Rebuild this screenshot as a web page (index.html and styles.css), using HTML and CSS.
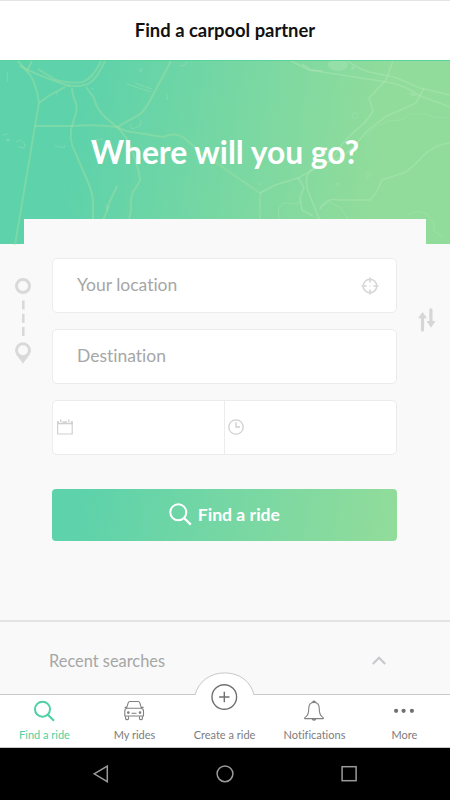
FILE: index.html
```html
<!DOCTYPE html>
<html lang="en">
<head>
    <meta charset="UTF-8">
    <meta name="viewport" content="width=device-width, initial-scale=1.0">
    <title>Find a carpool partner</title>
    <link rel="stylesheet" href="styles.css">
</head>
<body>
    <header class="topbar">
        <h1>Find a carpool partner</h1>
    </header>

    <section class="hero">
        <svg class="map" viewBox="0 0 450 184" fill="none">
            <!-- main roads -->
            <g class="roads">
                <path d="M18 0 L31 15 Q37 26 39 42 L35 65 L15 184"/>
                <path d="M35 65 L70 65 Q96 63 117 66 L126 70 L163 76 Q174 71 183 76 L196 87 L225 108 L260 132 V160"/>
                <path d="M20 5 Q30 10 39 14 L60 22 Q73 28 88 23 Q97 18 105 0"/>
                <path d="M38 8 L56 19 Q73 23 83 21 Q93 17 101 0 M32 0 L27 10"/>
                <path d="M39 42 L50 34 L65 26 M72 27 Q72 34 76 42 Q78 50 74 58 L71 69 Q70 77 72 84 L84 112 Q92 128 93 139 V160"/>
                <path d="M86 26 L94 37 Q97 49 105 56 L117 66 Q129 77 134 95 L139 111 L140 120 L133 131 Q130 139 131 148 L129 160"/>
                <path d="M171 0 L154 32 Q146 49 139 54 L126 61 Q121 64 117 66 M117 125 L109 142 Q107 153 102 160"/>
            </g>
            <g class="roads faint">
                <path d="M291 0 L309 9 L387 21 Q405 24 418 34 L450 46"/>
                <path d="M302 3 L311 9 L323 10 M348 0 Q361 10 374 12 L394 16 L420 27 L450 34"/>
                <path d="M393 0 L386 19 L369 37 L373 50 Q367 61 354 71 Q340 83 333 98 L298 117 L275 124 L260 132"/>
                <path d="M424 27 L416 42 L385 56 L366 71 Q350 92 338 97 L314 107 Q303 113 308 130 L320 160"/>
                <path d="M298 117 L304 126 L300 137 L302 149 L313 155 M320 148 Q327 136 338 139 H370 Q376 134 382 119 L406 111 Q415 104 424 94 Q436 83 450 82"/>
            </g>
            <g class="paths">
                <path d="M367 74 L377 65 L389 60 L401 59 L410 53 H425 L434 56 L450 57"/>
                <path d="M280 160 Q275 147 284 142 L298 143 L302 137 M320 146 L329 141 L340 146 L348 158"/>
                <path d="M408 154 L419 150 L427 153 L434 162 V170 L443 176"/>
                <path d="M353 52 h5 v5 l-4 1 l-2 -3z M366 111 l5 3 -4 3z M336 122 l2 3 2 -2z M258 121 l2 3 2 -2"/>
                <path d="M95 78 l3 1 5 -1 M55 84 l3 2 h7 v-2 M3 74 l5 -1 M16 81 l4 -2 5 4 -1 4 -6 -1 M8 10 q-2 6 0 11"/>
                <path d="M166 32 l2 3 -1 4 M138 8 l3 3 1 -4 M180 5 l5 -1 2 -3 M106 143 l1 6 2 -4 M130 63 l2 5 8 -3 1 -6"/>
                <path d="M127 23 l24 8 M135 22 l17 6 M58 31 l-2 3 M91 28 l3 -1"/>
            </g>
            <ellipse class="lake" cx="338" cy="4" rx="10" ry="6"/>
            <circle class="lake" cx="8" cy="79" r="1.5"/>
            <circle class="lake" cx="353" cy="7" r="2"/>
            <path class="lake" d="M408 31 l4 1 2 -2 0 3 3 2 -5 0z"/>
        </svg>
        <h2>Where will you go?</h2>
        <div class="panel-top"></div>
    </section>

    <main class="search">
        <svg class="route" width="16" height="86" viewBox="0 0 16 86">
            <circle cx="8" cy="8" r="6.5" fill="none" stroke="#d9d9d9" stroke-width="3"/>
            <path d="M8.3 22.5 v9 M8.3 35.8 v9 M8.3 49 v9" stroke="#d9d9d9" stroke-width="2.6"/>
            <path fill-rule="evenodd" fill="#d9d9d9" d="M8 64.3 a8 8 0 0 0 -8 8 c0 4.4 5 8.5 8 13.5 c3 -5 8 -9.1 8 -13.5 a8 8 0 0 0 -8 -8z M8 67.3 a5 5 0 1 1 0 10 a5 5 0 0 1 0 -10z"/>
        </svg>
        <div class="fields">
            <div class="field">
                <span>Your location</span>
                <svg width="18" height="18" viewBox="0 0 18 18" fill="none" stroke="#d6d6d6">
                    <circle cx="9" cy="9" r="6.8" stroke-width="1.6"/>
                    <path d="M9 .5 V5.6 M9 12.4 V17.5 M.5 9 H5.6 M12.4 9 H17.5" stroke-width="1.7"/>
                    <path d="M8.4 9 H9.6" stroke-width="1.2"/>
                </svg>
            </div>
            <div class="field">
                <span>Destination</span>
            </div>
            <div class="field split">
                <div class="half">
                    <svg width="16" height="16" viewBox="0 0 16 16" fill="none" stroke="#d0d0d0">
                        <path d="M.6 2.5 V15 H15.2 V2.5" stroke-width="1.2"/>
                        <path d="M0 4.5 H15.8" stroke-width="1.6"/>
                        <path d="M0 3 H2 M5.5 3 H10 M13.8 3 H15.8" stroke-width="1.6"/>
                        <path d="M3.8 .3 V3 M11.8 .3 V3" stroke-width="1.2"/>
                    </svg>
                </div>
                <div class="half">
                    <svg width="16" height="16" viewBox="0 0 16 16" fill="none" stroke="#d0d0d0">
                        <circle cx="8" cy="8" r="7.2" stroke-width="1.3"/>
                        <path d="M8 3.2 V8 H12" stroke-width="1.4"/>
                    </svg>
                </div>
            </div>
            <button class="find">
                <svg width="23" height="23" viewBox="0 0 23 23" fill="none" stroke="#fff">
                    <circle cx="9.3" cy="9.3" r="8" stroke-width="2"/>
                    <path d="M15 15 L21.8 21.6" stroke-width="2.3"/>
                </svg>
                <span>Find a ride</span>
            </button>
        </div>
        <svg class="swap" width="18" height="24" viewBox="0 0 18 24" fill="#d6d6d6">
            <path d="M0 10.2 L4.5 4 L9 10.2 H6.1 V22 a1.6 1.6 0 0 1 -3.2 0 V10.2z"/>
            <path d="M8.6 13 H11.3 V1.8 a1.6 1.6 0 0 1 3.2 0 V13 H17.5 L13 19.8z"/>
        </svg>
    </main>

    <section class="recent">
        <span>Recent searches</span>
        <svg width="14" height="9" viewBox="0 0 14 9" fill="none" stroke="#c8c7cc" stroke-width="2">
            <path d="M.8 8 L7 1.7 L13.2 8"/>
        </svg>
    </section>

    <nav class="tabs">
        <svg class="bump" width="60" height="24" viewBox="0 0 60 24">
            <path d="M0 24 V22.9 C3.5 9.5 15 .9 29.7 .9 C44.5 .9 56 9.5 59 22.9 V24z" fill="#fff"/>
            <path d="M0 22.9 C3.5 9.5 15 .9 29.7 .9 C44.5 .9 56 9.5 59 22.9" fill="none" stroke="#c8c8c8"/>
        </svg>
        <a class="tab active">
            <svg width="22" height="22" viewBox="0 0 22 22" fill="none" stroke="#4fd0a2">
                <circle cx="8.5" cy="9.2" r="7.5" stroke-width="2"/>
                <path d="M13.8 14.7 L20 20.8" stroke-width="2.1"/>
            </svg>
            <span>Find a ride</span>
        </a>
        <a class="tab">
            <svg width="22" height="22" viewBox="0 0 22 22" fill="none" stroke="#808080" stroke-width="1.1">
                <path d="M2.5 8.2 L4.2 2.8 Q4.6 1.5 5.8 1.5 H14.2 Q15.4 1.5 15.8 2.8 L17.5 8.2"/>
                <path d="M3 8.2 H17 Q19.5 8.6 19.5 11 V16 H.8 V11 Q.8 8.6 3 8.2z M.6 7.4 H2.8 M17.3 7.4 H19.6"/>
                <path d="M1.6 16.2 V18.6 Q1.6 19.6 2.6 19.6 H3.5 Q4.5 19.6 4.5 18.6 V16.2 M15.5 16.2 V18.6 Q15.5 19.6 16.5 19.6 H17.4 Q18.4 19.6 18.4 18.6 V16.2 M7.5 13.3 H12.5"/>
                <circle cx="4.3" cy="12.6" r=".8" fill="#777"/>
                <circle cx="16" cy="12.6" r=".8" fill="#777"/>
            </svg>
            <span>My rides</span>
        </a>
        <a class="tab create">
            <svg width="28" height="28" viewBox="0 0 28 28" fill="none" stroke="#707070" stroke-width="1.4">
                <circle cx="13.3" cy="14" r="12.3"/>
                <path d="M13.3 8.8 V19.2 M8.1 14 H18.5"/>
            </svg>
            <span>Create a ride</span>
        </a>
        <a class="tab">
            <svg width="22" height="22" viewBox="0 0 22 22" fill="none" stroke="#808080" stroke-width="1.1">
                <path d="M10 2.4 C6.2 2.4 4.8 5 4.8 8 C4.8 13 4.2 15 2 16.6 Q.2 18 .8 18.6 H19.2 Q19.8 18 18 16.6 C15.8 15 15.2 13 15.2 8 C15.2 5 13.8 2.4 10 2.4z"/>
                <path d="M8.6 2.3 Q10 .2 11.4 2.3 M8.3 19 Q10 21 11.7 19" stroke-width="1.4"/>
            </svg>
            <span>Notifications</span>
        </a>
        <a class="tab">
            <svg width="22" height="22" viewBox="0 0 22 22" fill="#707070">
                <circle cx="2.1" cy="10.8" r="2.1"/>
                <circle cx="9.6" cy="10.8" r="2.1"/>
                <circle cx="17.9" cy="10.8" r="2.1"/>
            </svg>
            <span>More</span>
        </a>
    </nav>

    <footer class="system">
        <svg width="18" height="20" viewBox="0 0 18 20"><path d="M2.2 9.8 L15.3 2 V17.6z"/></svg>
        <svg width="18" height="20" viewBox="0 0 18 20"><circle cx="9" cy="9.8" r="7.9"/></svg>
        <svg width="18" height="20" viewBox="0 0 18 20"><rect x="2.1" y="2.7" width="14" height="14"/></svg>
    </footer>
</body>
</html>
```

FILE: styles.css
```css
* {
    box-sizing: border-box;
}
body {
    font-family: Lato, "Open Sans", sans-serif;
    font-variant-ligatures: none;
    margin: 0;
    height: 800px;
    display: flex;
    flex-direction: column;
    background-color: #f9f9f9;
    color: #a6a6a6;
    overflow: hidden;
}
svg {
    display: block;
    flex: none;
}
h1, h2 {
    margin: 0;
    font-weight: bold;
}
.topbar {
    height: 60px;
    display: flex;
    align-items: center;
    justify-content: center;
    padding-bottom: 2px;
    background: white;
    border-top: 1px solid #e5e5e5;
    color: #111;
}
.topbar h1 {
    font-size: 18.4px;
    line-height: 22px;
}
.hero {
    position: relative;
    height: 183.5px;
    display: flex;
    flex-direction: column;
    justify-content: space-between;
    align-items: center;
    padding-top: 71px;
    background: linear-gradient(100deg, #5dd2ab 18%, #91dc9b 82%);
    border-top: 1px solid #58d39c;
    color: white;
}
.map {
    position: absolute;
    top: 0;
    left: 0;
    width: 450px;
    height: 184px;
}
.roads {
    stroke: #a0dfa5;
    stroke-opacity: 0.45;
    stroke-width: 2;
}
.faint {
    stroke: #b0e6b8;
    stroke-width: 1.6;
}
.paths {
    stroke: #b0e6b8;
    stroke-opacity: 0.35;
    stroke-width: 1;
}
.lake {
    fill: #b0e6b8;
    fill-opacity: 0.4;
}
.hero h2 {
    position: relative;
    font-size: 31.8px;
    line-height: 40px;
}
.panel-top {
    position: relative;
    width: 402px;
    height: 25px;
    background: #f9f9f9;
}
.search {
    height: 376.5px;
    display: flex;
    align-items: flex-start;
    padding: 14.5px 14px 0 15px;
}
.route {
    margin-top: 19.5px;
}
.fields {
    width: 345px;
    margin: 0 20.6px 0 21.4px;
    display: flex;
    flex-direction: column;
    gap: 16px;
}
.field {
    height: 55px;
    display: flex;
    align-items: center;
    justify-content: space-between;
    padding: 0 17px 0 23.6px;
    background: white;
    border: 1px solid #ececec;
    border-radius: 5px;
    font-size: 17.5px;
}
.field span {
    margin-top: -3px;
}
.split {
    padding: 0;
    align-items: stretch;
}
.half {
    width: 171px;
    display: flex;
    align-items: center;
    padding: 0 4px 2px;
}
.half + .half {
    flex: 1;
    border-left: 1px solid #ececec;
    padding-left: 3px;
}
.find {
    height: 52px;
    margin-top: 18px;
    padding: 0 1px 1px 0;
    display: flex;
    align-items: center;
    justify-content: center;
    gap: 6px;
    border: none;
    border-radius: 4px;
    background: linear-gradient(100deg, #5dd2ab 8%, #91dc9b 98%);
    color: white;
    font-family: inherit;
    font-size: 17.6px;
    font-weight: bold;
}
.find span {
    margin-top: -1px;
}
.swap {
    margin-top: 50px;
}
.recent {
    height: 74px;
    display: flex;
    align-items: flex-start;
    justify-content: space-between;
    padding: 29px 64px 0 49px;
    border-top: 2px solid #e3e3e3;
    font-size: 16.4px;
    line-height: 20px;
}
.recent svg {
    margin-top: 5px;
}
.tabs {
    position: relative;
    height: 54px;
    display: flex;
    background: white;
    border-top: 1px solid #c8c8c8;
    border-bottom: 1px solid #c8c8c8;
    color: #7c7c7c;
    font-size: 11px;
}
.bump {
    position: absolute;
    left: 195px;
    top: -23px;
}
.tab {
    position: relative;
    width: 90px;
    display: flex;
    flex-direction: column;
    align-items: center;
    justify-content: flex-end;
    gap: 5px;
    padding: 0 1px 5px 0;
    line-height: 15px;
}
.active {
    color: #4fd0a2;
}
.create {
    gap: 16px;
}
.system {
    height: 52px;
    display: flex;
    justify-content: center;
    gap: 106px;
    padding-top: 16px;
    background: black;
}
.system svg {
    fill: none;
    stroke: #9a9a9a;
    stroke-width: 1.5;
}
```
